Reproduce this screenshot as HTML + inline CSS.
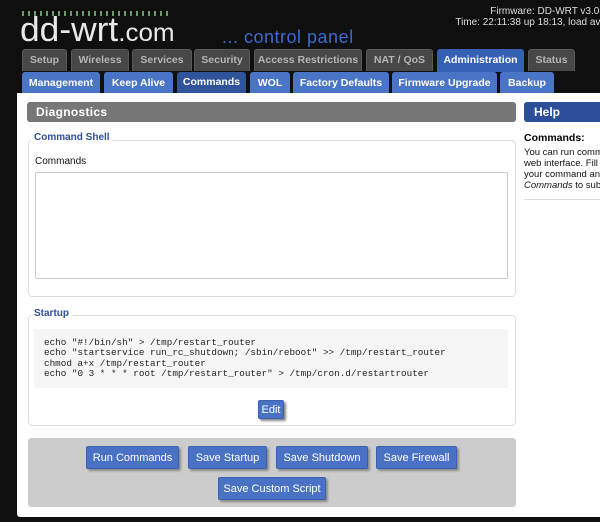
<!DOCTYPE html>
<html><head><style>
*{margin:0;padding:0;box-sizing:border-box}
body{width:600px;height:522px;background:#0f0f0f;font-family:"Liberation Sans",sans-serif;position:relative;overflow:hidden}
.a{position:absolute}
.t1{position:absolute;top:49px;height:22px;background:#474747;color:#b5b5b5;font-size:10.5px;font-weight:bold;text-align:center;line-height:21px;border-radius:3px 3px 0 0;border:1px solid #5a5a5a;border-bottom:none}
.t2{position:absolute;top:72px;height:22px;background:#4a74c6;color:#fff;font-size:10.5px;font-weight:bold;text-align:center;line-height:22px;border-radius:3px 3px 0 0}
.btn{position:absolute;background:#4a72c4;color:#fff;font-size:11px;text-align:center;border-radius:2px;box-shadow:2px 2px 2px #888;border:1px solid #3b61b0}
fieldset{position:absolute;border:1px solid #ddd;border-radius:4px}
.lg{position:absolute;background:#fff;color:#2d4f94;font-size:10px;font-weight:bold;padding:0 3px}
</style></head><body>
<div class="a" style="left:22px;top:11px;width:150px;height:5px;background:repeating-linear-gradient(90deg,#6a9a6a 0 2px,transparent 2px 6px)"></div>
<div class="a" style="left:20px;top:11px;font-size:34px;color:#e8e8e8;line-height:38px;transform:scaleX(1.04);transform-origin:left">dd-wrt<span style="font-size:25px">.com</span></div>
<div class="a" style="left:222px;top:26px;font-size:18px;color:#3a6bd0;line-height:22px;letter-spacing:.5px">... control panel</div>
<div class="a" style="right:-6px;top:6px;font-size:10px;color:#ddd;text-align:right;line-height:11px;white-space:nowrap">Firmware: DD-WRT v3.0-r<br>Time: 22:11:38 up 18:13, load ave</div>
<div class="t1" style="left:22px;width:45px">Setup</div>
<div class="t1" style="left:71px;width:58px">Wireless</div>
<div class="t1" style="left:132px;width:60px">Services</div>
<div class="t1" style="left:194px;width:56px">Security</div>
<div class="t1" style="left:254px;width:108px">Access Restrictions</div>
<div class="t1" style="left:366px;width:67px">NAT / QoS</div>
<div class="t1" style="left:437px;width:87px;background:#3561b4;color:#fff;border-color:#3561b4;height:23px">Administration</div>
<div class="t1" style="left:528px;width:47px">Status</div>
<div class="t2" style="left:22px;width:78px">Management</div>
<div class="t2" style="left:104px;width:69px">Keep Alive</div>
<div class="t2" style="left:177px;width:69px;background:#2f5499;line-height:20px">Commands</div>
<div class="t2" style="left:250px;width:40px">WOL</div>
<div class="t2" style="left:293px;width:96px">Factory Defaults</div>
<div class="t2" style="left:392px;width:105px">Firmware Upgrade</div>
<div class="t2" style="left:500px;width:54px">Backup</div>
<div class="a" style="left:17px;top:93px;width:583px;height:424px;background:#fff;border-radius:0 0 0 3px"></div>
<div class="a" style="left:27px;top:102px;width:489px;height:20px;background:#777;border-radius:3px;color:#fff;font-size:12px;font-weight:bold;line-height:20px;padding-left:9px;letter-spacing:.3px">Diagnostics</div>
<div class="a" style="left:524px;top:102px;width:80px;height:20px;background:#2d4f9a;border-radius:3px;color:#fff;font-size:12px;font-weight:bold;line-height:20px;padding-left:10px">Help</div>
<div class="a" style="left:524px;top:132px;font-size:10.5px;font-weight:bold;color:#000">Commands:</div>
<div class="a" style="left:524px;top:147px;font-size:9.5px;line-height:11px;color:#111;white-space:nowrap">You can run comm<br>web interface. Fill<br>your command and<br><i>Commands</i> to subr</div>
<div class="a" style="left:524px;top:199px;width:76px;height:1px;background:#ddd"></div>
<fieldset style="left:28px;top:140px;width:488px;height:157px"></fieldset>
<div class="lg" style="left:31px;top:132px">Command Shell</div>
<div class="a" style="left:35px;top:156px;font-size:10px;color:#111">Commands</div>
<div class="a" style="left:35px;top:172px;width:473px;height:107px;border:1px solid #ccc;border-radius:2px"></div>
<fieldset style="left:28px;top:315px;width:488px;height:111px"></fieldset>
<div class="lg" style="left:31px;top:308px">Startup</div>
<div class="a" style="left:34px;top:329px;width:474px;height:59px;background:#f5f5f5"></div>
<pre class="a" style="left:44px;top:338px;font-family:'Liberation Mono',monospace;font-size:9.3px;line-height:10.4px;color:#222">echo "#!/bin/sh" &gt; /tmp/restart_router
echo "startservice run_rc_shutdown; /sbin/reboot" &gt;&gt; /tmp/restart_router
chmod a+x /tmp/restart_router
echo "0 3 * * * root /tmp/restart_router" &gt; /tmp/cron.d/restartrouter</pre>
<div class="btn" style="left:258px;top:400px;width:26px;height:19px;line-height:19px">Edit</div>
<div class="a" style="left:28px;top:438px;width:488px;height:69px;background:#ccc;border-radius:3px"></div>
<div class="btn" style="left:86px;top:446px;width:93px;height:23px;line-height:23px">Run Commands</div>
<div class="btn" style="left:188px;top:446px;width:79px;height:23px;line-height:23px">Save Startup</div>
<div class="btn" style="left:276px;top:446px;width:92px;height:23px;line-height:23px">Save Shutdown</div>
<div class="btn" style="left:376px;top:446px;width:81px;height:23px;line-height:23px">Save Firewall</div>
<div class="btn" style="left:218px;top:477px;width:108px;height:23px;line-height:23px">Save Custom Script</div>
</body></html>
